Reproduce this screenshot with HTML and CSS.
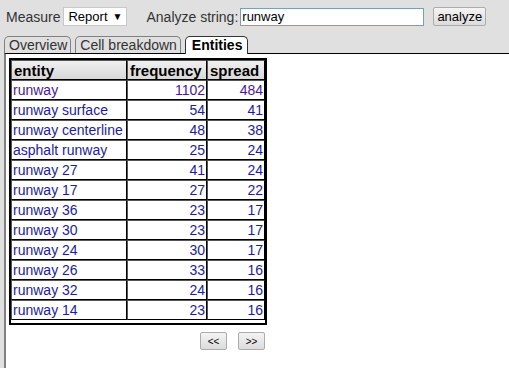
FILE: index.html
```html
<!DOCTYPE html>
<html lang="en">
<head>
    <meta charset="UTF-8">
    <title>Entities</title>
    <link rel="stylesheet" href="styles.css">
</head>
<body>
    <!-- top toolbar -->
    <div class="toolbar">
        <span class="label">Measure</span>
        <span class="select">Report <span class="arrow">&#9660;</span></span>
        <span class="label analyze-label">Analyze string:</span>
        <input class="search" type="text" value="runway">
        <button class="btn analyze">analyze</button>
    </div>

    <!-- tabs -->
    <div class="tabs">
        <div class="tab">Overview</div>
        <div class="tab">Cell breakdown</div>
        <div class="tab active">Entities</div>
    </div>

    <!-- panel -->
    <div class="panel">
        <div class="table-wrap">
            <table class="entities">
                <thead>
                    <tr><th class="c-entity">entity</th><th class="c-freq">frequency</th><th class="c-spread">spread</th></tr>
                </thead>
                <tbody>
                    <tr class="first"><td>runway</td><td class="num">1102</td><td class="num">484</td></tr>
                    <tr><td>runway surface</td><td class="num">54</td><td class="num">41</td></tr>
                    <tr><td>runway centerline</td><td class="num">48</td><td class="num">38</td></tr>
                    <tr><td>asphalt runway</td><td class="num">25</td><td class="num">24</td></tr>
                    <tr><td>runway 27</td><td class="num">41</td><td class="num">24</td></tr>
                    <tr><td>runway 17</td><td class="num">27</td><td class="num">22</td></tr>
                    <tr><td>runway 36</td><td class="num">23</td><td class="num">17</td></tr>
                    <tr><td>runway 30</td><td class="num">23</td><td class="num">17</td></tr>
                    <tr><td>runway 24</td><td class="num">30</td><td class="num">17</td></tr>
                    <tr><td>runway 26</td><td class="num">33</td><td class="num">16</td></tr>
                    <tr><td>runway 32</td><td class="num">24</td><td class="num">16</td></tr>
                    <tr><td>runway 14</td><td class="num">23</td><td class="num">16</td></tr>
                </tbody>
            </table>
        </div>
        <div class="pager">
            <button class="btn page">&lt;&lt;</button>
            <button class="btn page">&gt;&gt;</button>
        </div>
    </div>
</body>
</html>
```

FILE: styles.css
```css
* {
    margin: 0;
    padding: 0;
    box-sizing: border-box;
}

body {
    background: #e0e0e0;
    font-family: "Liberation Sans", Arial, sans-serif;
    font-size: 14px;
    color: #000;
    height: 368px;
    overflow: hidden;
    display: flex;
    flex-direction: column;
}

/* toolbar */
.toolbar {
    display: flex;
    align-items: center;
    height: 33px;
    padding: 0 0 0 6px;
}

.label {
    color: #333;
    font-size: 14px;
}

.select {
    display: inline-flex;
    align-items: center;
    justify-content: space-between;
    margin-left: 3px;
    width: 64px;
    height: 19px;
    padding: 0 4px 0 4px;
    background: #fff;
    border: 1px solid #c8c8c8;
    font-size: 13px;
}

.select .arrow {
    font-size: 10px;
}

.analyze-label {
    margin-left: 19px;
}

.search {
    margin-left: 2px;
    width: 184px;
    height: 18px;
    border: 1px solid #7f9db9;
    padding: 0 1px;
    font-family: inherit;
    font-size: 13px;
    color: #000;
}

.btn {
    font-family: inherit;
    background: linear-gradient(#f4f4f4, #dcdcdc);
    border: 1px solid #acacac;
    border-radius: 2px;
    color: #000;
}

.analyze {
    margin-left: 9px;
    width: 53px;
    height: 19px;
    font-size: 13px;
}

/* tabs */
.tabs {
    display: flex;
    align-items: flex-end;
    gap: 4px;
    padding-left: 4px;
    height: 20px;
    position: relative;
    z-index: 1;
}

.tab {
    height: 17px;
    line-height: 16px;
    padding: 0 3px 0 4px;
    border: 1px solid #808080;
    border-bottom: none;
    border-radius: 5px 5px 0 0;
    color: #333;
    font-size: 14px;
}

.tab.active {
    height: 18px;
    margin-bottom: -1px;
    background: #fff;
    border-color: #333;
    color: #000;
    font-weight: bold;
    padding: 0 5px 0 6px;
}

/* panel */
.panel {
    flex: 1;
    margin-left: 4px;
    background: #fff;
    border-top: 1px solid #000;
    border-left: 2px solid #808080;
    padding: 4px 0 0 3px;
}

.table-wrap {
    display: inline-block;
    border: 2px solid #000;
    padding-bottom: 3px;
}

.entities {
    border-collapse: separate;
    border-spacing: 0;
    font-size: 14px;
}

.entities th,
.entities td {
    height: 20px;
    padding: 0 1px;
    border-top: 1px solid #555;
    border-left: 1px solid #555;
    border-right: 1px solid #000;
    border-bottom: 1px solid #000;
    white-space: nowrap;
}

.entities th {
    background: linear-gradient(#f0f0f0, #d8d8d8);
    text-align: left;
    font-size: 15px;
    padding-left: 2px;
}

.entities td {
    color: #1d1d96;
    text-align: left;
}

.entities tr.first td {
    color: #4a1a8e;
}

.c-entity { width: 116px; }
.c-freq { width: 80px; }
.c-spread { width: 58px; }

.entities td.num {
    text-align: right;
}

/* pager */
.pager {
    display: flex;
    gap: 11px;
    width: 256px;
    justify-content: flex-end;
    margin-top: 4px;
}

.page {
    width: 27px;
    height: 18px;
    font-size: 10px;
}
```
